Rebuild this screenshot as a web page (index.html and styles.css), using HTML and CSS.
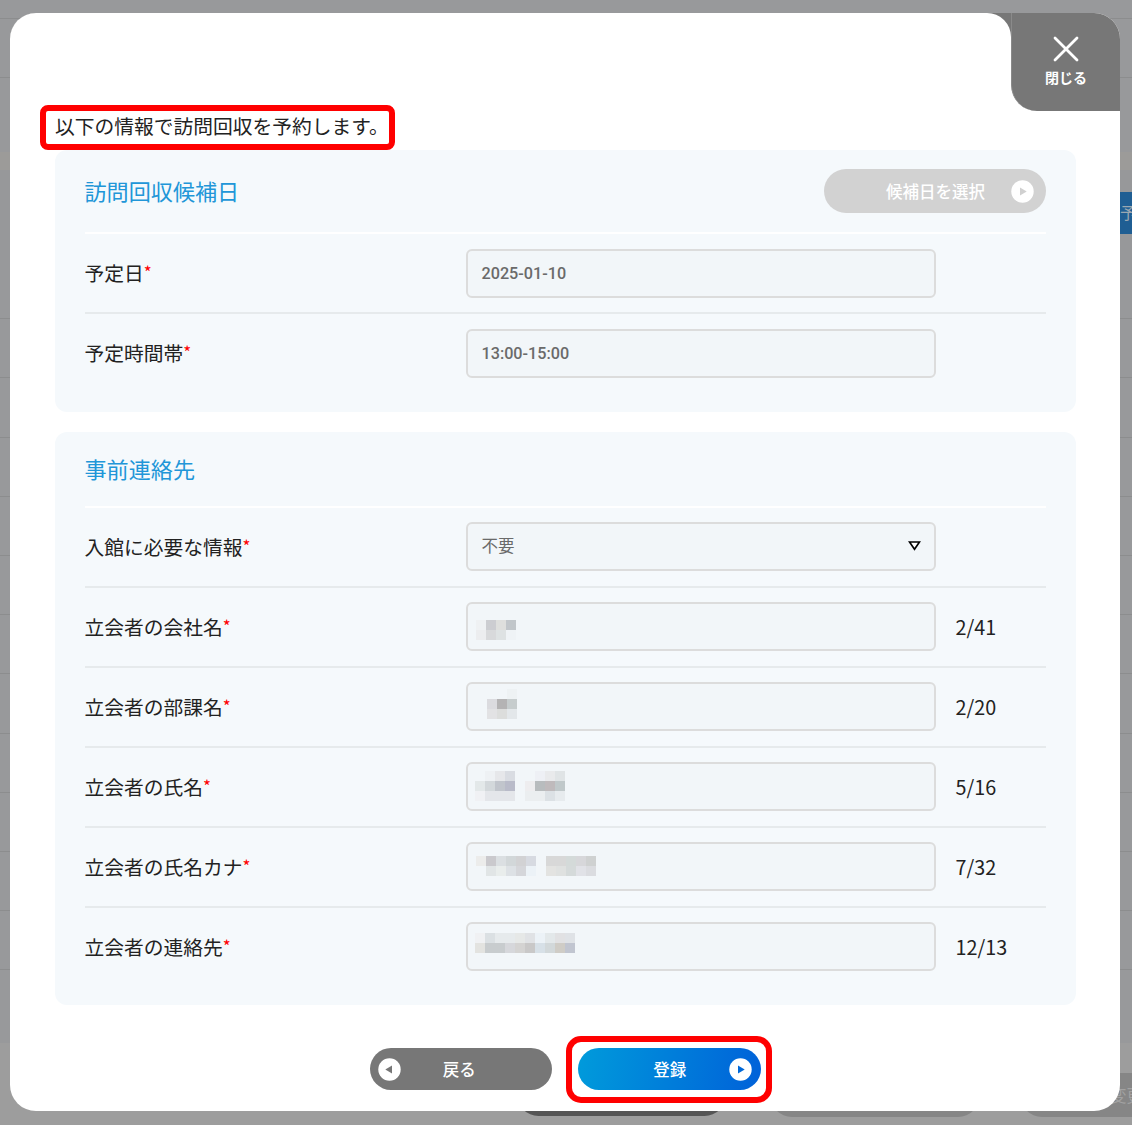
FILE: index.html
```html
<!DOCTYPE html>
<html lang="ja">
<head>
<meta charset="utf-8">
<title>訪問回収の予約</title>
<link rel="stylesheet" href="styles.css">
</head>
<body>
<div class="page" aria-hidden="true">
  <div class="page-top"></div>
  <div class="page-gap"></div>
  <div class="page-tabs"><span class="page-tab">予</span></div>
  <div class="page-list"></div>
  <div class="page-foot">
    <span class="ghost ghost-dark"></span><span class="ghost"></span><span class="ghost ghost-text">変更</span>
  </div>
</div>

<main class="modal">
  <div class="modal-top">
    <div class="modal-top-fill"></div>
    <div class="close-wrap">
      <button class="close" type="button">
        <svg width="26" height="26" viewBox="0 0 26 26"><path d="M2 2L24 24M24 2L2 24" stroke="#fff" stroke-width="2.8" stroke-linecap="round"/></svg>
        <span>閉じる</span>
      </button>
    </div>
  </div>
  <div class="modal-body">
    <p class="lead"><span class="lead-text">以下の情報で訪問回収を予約します。<i class="mark mark-lead"></i></span></p>

    <section class="card card-date">
      <header class="card-head">
        <h2>訪問回収候補日</h2>
        <button class="pill pill-disabled" type="button"><span>候補日を選択</span>
          <svg class="pill-icon" width="23" height="23" viewBox="0 0 23 23"><circle cx="11.5" cy="11.5" r="11.2" fill="#fff"/><path d="M9 7.5L15.7 11.5L9 15.5Z" fill="#d0d0d0"/></svg>
        </button>
      </header>
      <div class="row"><label>予定日<sup>*</sup></label><div class="field">2025-01-10</div></div>
      <div class="row"><label>予定時間帯<sup>*</sup></label><div class="field">13:00-15:00</div></div>
    </section>

    <section class="card card-contact">
      <header class="card-head"><h2>事前連絡先</h2></header>
      <div class="row"><label>入館に必要な情報<sup>*</sup></label>
        <div class="field select"><span>不要</span><svg width="13" height="10" viewBox="0 0 13 10"><path d="M1.5 1H11.5L6.5 8.3Z" fill="#fff" stroke="#000" stroke-width="1.7"/></svg></div></div>
      <div class="row"><label>立会者の会社名<sup>*</sup></label>
        <div class="field masked"><svg width="130" height="45" shape-rendering="crispEdges">
          <path fill="#eff1f3" d="M8 16h10v10H8z"/><path fill="#cccdd1" d="M18 16h10v10H18z"/><path fill="#dedfdd" d="M28 16h10v10H28z"/><path fill="#c1c6ca" d="M38 16h10v10H38z"/>
          <path fill="#ecedef" d="M8 26h10v10H8z"/><path fill="#d8d9db" d="M18 26h10v10H18z"/><path fill="#dee2e3" d="M28 26h10v10H28z"/><path fill="#eff3f6" d="M38 26h10v10H38z"/>
        </svg></div><span class="count">2/41</span></div>
      <div class="row"><label>立会者の部課名<sup>*</sup></label>
        <div class="field masked"><svg width="130" height="45" shape-rendering="crispEdges">
          <path fill="#eef2f4" d="M39 5h10v10H39z"/>
          <path fill="#dbdbdf" d="M19 15h10v10H19z"/><path fill="#b4b3b4" d="M29 15h10v10H29z"/><path fill="#c6cccd" d="M39 15h10v10H39z"/>
          <path fill="#e2e2e4" d="M19 25h10v10H19z"/><path fill="#dcdddc" d="M29 25h10v10H29z"/><path fill="#e3e7ea" d="M39 25h10v10H39z"/>
        </svg></div><span class="count">2/20</span></div>
      <div class="row"><label>立会者の氏名<sup>*</sup></label>
        <div class="field masked"><svg width="130" height="45" shape-rendering="crispEdges">
          <path fill="#eef1f4" d="M17 7h10v10H17z"/><path fill="#e6e7ea" d="M27 7h10v10H27z"/><path fill="#d9dce2" d="M37 7h10v10H37z"/><path fill="#eef0f5" d="M67 7h10v10H67z"/><path fill="#e9eaec" d="M77 7h10v10H77z"/><path fill="#e0e4e6" d="M87 7h10v10H87z"/>
          <path fill="#e3e8e9" d="M7 17h10v10H7z"/><path fill="#d3d8db" d="M17 17h10v10H17z"/><path fill="#c1c5cc" d="M27 17h10v10H27z"/><path fill="#b9bbc9" d="M37 17h10v10H37z"/><path fill="#eeedef" d="M57 17h10v10H57z"/><path fill="#b8bcbe" d="M67 17h10v10H67z"/><path fill="#bfbabc" d="M77 17h10v10H77z"/><path fill="#c0c8ca" d="M87 17h10v10H87z"/>
          <path fill="#f0f1f4" d="M7 27h10v10H7z"/><path fill="#e4e6ea" d="M17 27h30v10H17z"/><path fill="#ebeef0" d="M57 27h20v10H57z"/><path fill="#dce1e5" d="M77 27h10v10H77z"/><path fill="#e7ebee" d="M87 27h10v10H87z"/>
        </svg></div><span class="count">5/16</span></div>
      <div class="row"><label>立会者の氏名カナ<sup>*</sup></label>
        <div class="field masked"><svg width="130" height="45" shape-rendering="crispEdges">
          <path fill="#ececeb" d="M8 12h10v10H8z"/><path fill="#cac9cd" d="M18 12h10v10H18z"/><path fill="#dbdfe2" d="M28 12h10v10H28z"/><path fill="#d2d7d9" d="M38 12h10v10H38z"/><path fill="#d2d2d4" d="M48 12h10v10H48z"/><path fill="#d7dae1" d="M58 12h10v10H58z"/><path fill="#d8d8d8" d="M78 12h20v10H78z"/><path fill="#d4dad9" d="M98 12h10v10H98z"/><path fill="#d7d7da" d="M108 12h10v10H108z"/><path fill="#cfd1d1" d="M118 12h10v10H118z"/>
          <path fill="#e1e5e6" d="M18 22h10v10H18z"/><path fill="#e9edec" d="M28 22h10v10H28z"/><path fill="#dde1e5" d="M38 22h10v10H38z"/><path fill="#d5d6da" d="M48 22h10v10H48z"/><path fill="#ecf2f7" d="M58 22h10v10H58z"/><path fill="#e3e3e1" d="M78 22h10v10H78z"/><path fill="#dfe1e0" d="M88 22h10v10H88z"/><path fill="#d5dada" d="M98 22h10v10H98z"/><path fill="#e1e2e7" d="M108 22h10v10H108z"/><path fill="#dbdce0" d="M118 22h10v10H118z"/>
        </svg></div><span class="count">7/32</span></div>
      <div class="row"><label>立会者の連絡先<sup>*</sup></label>
        <div class="field masked"><svg width="130" height="45" shape-rendering="crispEdges">
          <path fill="#f0f1f3" d="M7 9h10v10H7z"/><path fill="#dbe0e3" d="M17 9h10v10H17z"/><path fill="#e6eaec" d="M27 9h20v10H27z"/><path fill="#e6e8e7" d="M47 9h10v10H47z"/><path fill="#e0e2e5" d="M57 9h10v10H57z"/><path fill="#ecf2f7" d="M67 9h10v10H67z"/><path fill="#e3e8ea" d="M77 9h10v10H77z"/><path fill="#e1e1e3" d="M87 9h10v10H87z"/><path fill="#dfe2e6" d="M97 9h10v10H97z"/>
          <path fill="#e3e3e0" d="M7 19h10v10H7z"/><path fill="#c8ccce" d="M17 19h20v10H17z"/><path fill="#d6d7db" d="M37 19h10v10H37z"/><path fill="#d4d3d2" d="M47 19h10v10H47z"/><path fill="#c9c8c8" d="M57 19h10v10H57z"/><path fill="#d7e0e7" d="M67 19h10v10H67z"/><path fill="#d2d8da" d="M77 19h10v10H77z"/><path fill="#cfccc6" d="M87 19h10v10H87z"/><path fill="#c1c5d0" d="M97 19h10v10H97z"/>
        </svg></div><span class="count">12/13</span></div>
    </section>

    <div class="actions">
      <button class="pill pill-back" type="button"><svg class="pill-icon" width="23" height="23" viewBox="0 0 23 23"><circle cx="11.5" cy="11.5" r="11.2" fill="#fff"/><path d="M14 7.5L7.3 11.5L14 15.5Z" fill="#777"/></svg><span>戻る</span></button>
      <button class="pill pill-submit" type="button"><span>登録</span><svg class="pill-icon" width="23" height="23" viewBox="0 0 23 23"><circle cx="11.5" cy="11.5" r="11.2" fill="#fff"/><path d="M9 7.5L15.7 11.5L9 15.5Z" fill="#0068d8"/></svg><i class="mark mark-submit"></i></button>
    </div>
  </div>
</main>
</body>
</html>
```
FILE: styles.css
```css
* { box-sizing: border-box; }
body {
  margin: 0;
  width: 1132px;
  height: 1125px;
  overflow: hidden;
  position: relative;
  font-family: "Noto Sans CJK JP", sans-serif;
  font-size: 19.75px;
  color: #222;
}
button { border: 0; padding: 0; font: inherit; color: #fff; }
h2, p { margin: 0; font-weight: 400; }
svg { display: block; fill: none; }

/* dimmed page behind the dialog */
.page { height: 1125px; display: flex; flex-direction: column; background: #9d9d9d; }
.page-top {
  height: 152px;
  background: linear-gradient(#8c8d8e, #8c8d8e) 0 18px / 100% 1px no-repeat,
              linear-gradient(#8c8d8e, #8c8d8e) 0 77px / 100% 1px no-repeat, #98999b;
}
.page-gap { height: 18px; background: #9c9b99; }
.page-tabs { height: 90px; padding-top: 22px; display: flex; justify-content: flex-end; background: #97989a; }
.page-tab {
  width: 12px; height: 42px; overflow: hidden; background: #1f5e93; color: #9aa7b1;
  font-size: 16px; line-height: 40px;
}
.page-list {
  height: 783px;
  background: repeating-linear-gradient(transparent 0 58.2px, #8c8d8e 58.2px 59.2px) 0 0 / 100% 760px no-repeat #98999b;
}
.page-foot { flex: 1; display: flex; align-items: flex-start; gap: 44px; padding: 30px 0 0 517px; overflow: hidden; }
.ghost { flex: none; width: 210px; height: 44px; border-radius: 22px; background: #868686; }
.ghost-dark { width: 209px; height: 43px; background: #555; }
.ghost-text { margin-left: -4px; color: #a2a2a2; font-size: 16.5px; line-height: 44px; padding-left: 90px; }

.modal {
  position: absolute;
  left: 10px; top: 13px;
  width: 1110px; height: 1098px;
  border-radius: 26px;
  background: #fff;
  overflow: hidden;
}
.modal-top { display: flex; height: 98px; background: #777; }
.modal-top-fill { flex: 1; background: #fff; border-radius: 0 24px 0 0; }
.close-wrap { width: 109px; background: #fff; }
.close {
  width: 109px; height: 98px; border-radius: 0 0 0 26px; background: #777;
  border-left: 1px solid #8a8a8a;
  display: flex; flex-direction: column; align-items: center; padding-top: 23px;
  font-size: 14px; font-weight: 700; line-height: 20px;
}
.close span { margin-top: 5px; }
.modal-body { padding: 0 44.5px 0 45px; }

.lead { height: 39px; line-height: 29px; color: #222; }
.lead-text { position: relative; }
.mark { position: absolute; border: 6px solid #f00; pointer-events: none; }
.mark-lead { left: -15px; top: -6px; width: 355px; height: 45px; border-radius: 8px; }
.mark-submit { left: -12px; top: -12px; width: 206px; height: 67px; border-radius: 15px; }

.card { background: #f5f9fc; border-radius: 12px; padding: 0 29.5px 20px; }
.card-date { height: 262px; margin-bottom: 20px; }
.card-contact { height: 572.5px; }
.card-head {
  height: 84px; border-bottom: 2px solid #fff;
  display: flex; justify-content: space-between; align-items: center;
}
.card-contact .card-head { height: 75.5px; }
h2 { font-size: 22.1px; line-height: 32px; color: #2196d8; padding-bottom: 2px; }
.row { height: 80px; display: flex; align-items: center; border-bottom: 2px solid #e6eaec; }
.row:last-child { border-color: transparent; }
.row label { width: 381px; line-height: 30px; color: #222; }
sup { font-size: 17px; line-height: 0; color: #f00; vertical-align: 2px; }
.field {
  width: 470px; height: 49px; border: 2px solid #dcdcdc; border-radius: 6px; background: #f2f6f9;
  padding: 0 14px; line-height: 46px; font-family: Roboto, sans-serif; font-size: 16.2px; font-weight: 500; color: #6a6a6a;
}
.select {
  display: flex; justify-content: space-between; align-items: center;
  font-family: "Noto Sans CJK JP", sans-serif; font-size: 16.5px; font-weight: 400; padding-right: 13px; padding-bottom: 2px;
}
.select span { line-height: 43px; }
.masked { padding: 0; }
.count { margin-left: 20px; line-height: 30px; }

.pill {
  position: relative; display: flex; align-items: center; border-radius: 22px;
  font-size: 16.5px; font-weight: 500;
}
.pill span { line-height: 24px; }
.pill-disabled { width: 222px; height: 44px; padding-left: 62px; background: #d2d2d2; }
.pill-disabled .pill-icon { margin-left: 26px; }
.actions { display: flex; justify-content: center; gap: 26px; padding: 43.5px 0 0 0; }
.pill-back, .pill-submit { width: 182.5px; height: 42px; }
.pill-back { background: #777; padding-left: 8px; }
.pill-back span { margin-left: 42px; }
.pill-submit { background: linear-gradient(100deg, #009bdb, #0061d9); padding-left: 75px; }
.pill-submit .pill-icon { margin-left: 43px; }
```
